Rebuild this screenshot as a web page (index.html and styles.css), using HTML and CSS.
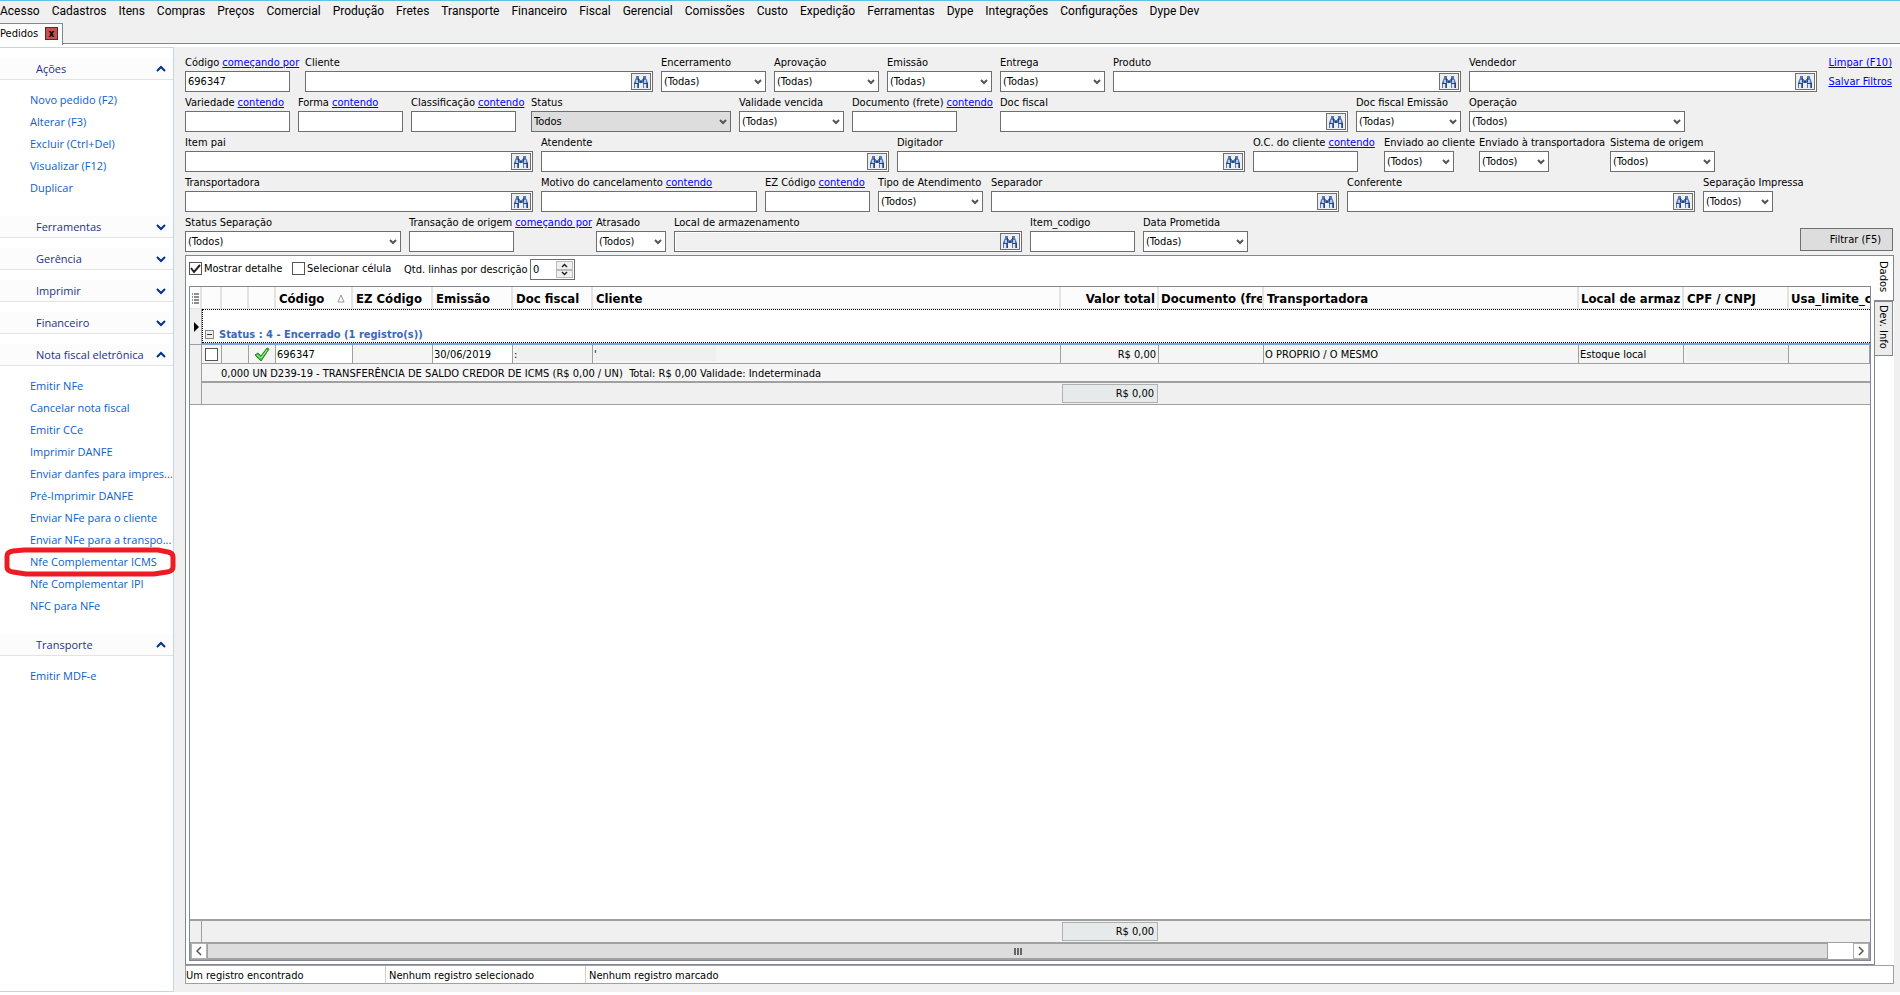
FILE: index.html
```
<!DOCTYPE html>
<html lang="pt-BR">
<head>
    <meta charset="UTF-8">
    <meta name="viewport" content="width=device-width, initial-scale=1.0">
    <title>Pedidos</title>
    <link rel="stylesheet" href="styles.css">
</head>
<body>
    <!-- shared icons -->
    <svg class="sprite" aria-hidden="true">
        <symbol id="binoculars" viewBox="0 0 16 14">
            <path d="M3 1h3v3h1v1h2V4h1V1h3v2l1 2 1 3v5h-5V8H6v5H1V8l1-3 1-2z" fill="#5478b4"/>
            <path d="M3 5h2v3H3zM11 5h2v3h-2z" fill="#b9cbe8"/>
            <path d="M2 9h2v4H2zM11 9h2v4h-2z" fill="#dfe8f6"/>
            <path d="M5 9h1v4H5zM14 9h1v4h-1zM5 3h1v4H5zM10 3h1v4h-1zM7 6h2v2H7zM1 8h5v1H1zM10 8h5v1h-5z" fill="#27457f"/>
        </symbol>
        <symbol id="down" viewBox="0 0 10 8">
            <path d="M1 2l4 4 4-4" fill="none" stroke="#00308f" stroke-width="2"/>
        </symbol>
        <symbol id="up" viewBox="0 0 10 8">
            <path d="M1 6l4-4 4 4" fill="none" stroke="#00308f" stroke-width="2"/>
        </symbol>
    </svg>

    <nav class="menu">
        <a href="#">Acesso</a>
        <a href="#">Cadastros</a>
        <a href="#">Itens</a>
        <a href="#">Compras</a>
        <a href="#">Preços</a>
        <a href="#">Comercial</a>
        <a href="#">Produção</a>
        <a href="#">Fretes</a>
        <a href="#">Transporte</a>
        <a href="#">Financeiro</a>
        <a href="#">Fiscal</a>
        <a href="#">Gerencial</a>
        <a href="#">Comissões</a>
        <a href="#">Custo</a>
        <a href="#">Expedição</a>
        <a href="#">Ferramentas</a>
        <a href="#">Dype</a>
        <a href="#">Integrações</a>
        <a href="#">Configurações</a>
        <a href="#">Dype Dev</a>
    </nav>

    <div class="tabs">
        <div class="tab">Pedidos <button class="close" aria-label="Fechar">x</button></div>
    </div>

    <div class="workspace">
        <aside class="sidebar">
            <section>
                <h2>Ações <svg><use href="#up"/></svg></h2>
                <ul>
                    <li><a href="#">Novo pedido (F2)</a></li>
                    <li><a href="#">Alterar (F3)</a></li>
                    <li><a href="#">Excluir (Ctrl+Del)</a></li>
                    <li><a href="#">Visualizar (F12)</a></li>
                    <li><a href="#">Duplicar</a></li>
                </ul>
            </section>
            <section><h2>Ferramentas <svg><use href="#down"/></svg></h2></section>
            <section><h2>Gerência <svg><use href="#down"/></svg></h2></section>
            <section><h2>Imprimir <svg><use href="#down"/></svg></h2></section>
            <section><h2>Financeiro <svg><use href="#down"/></svg></h2></section>
            <section>
                <h2>Nota fiscal eletrônica <svg><use href="#up"/></svg></h2>
                <ul>
                    <li><a href="#">Emitir NFe</a></li>
                    <li><a href="#">Cancelar nota fiscal</a></li>
                    <li><a href="#">Emitir CCe</a></li>
                    <li><a href="#">Imprimir DANFE</a></li>
                    <li><a href="#">Enviar danfes para impres...</a></li>
                    <li><a href="#">Pré-Imprimir DANFE</a></li>
                    <li><a href="#">Enviar NFe para o cliente</a></li>
                    <li><a href="#">Enviar NFe para a transpo...</a></li>
                    <li class="marked">
                        <a href="#">Nfe Complementar ICMS</a>
                        <svg class="ring" viewBox="0 0 172 30"><path d="M20 3H154L164 5Q169 6 169 10V20Q169 24 163 25L150 27H22L9 25Q3 24 3 20V9Q3 5 9 4Z" fill="none" stroke="#ed1c24" stroke-width="5"/></svg>
                    </li>
                    <li><a href="#">Nfe Complementar IPI</a></li>
                    <li><a href="#">NFC para NFe</a></li>
                </ul>
            </section>
            <section>
                <h2>Transporte <svg><use href="#up"/></svg></h2>
                <ul>
                    <li><a href="#">Emitir MDF-e</a></li>
                </ul>
            </section>
        </aside>

        <main>
            <form class="filters">
                <div class="row">
                    <div class="field cap-112"><div class="caption"><label for="codigo">Código</label><a href="#">começando por</a></div><input id="codigo" class="small" value="696347"></div>
                    <div class="field"><div class="caption"><label for="cliente">Cliente</label></div><div class="lookup"><input id="cliente"><button type="button" aria-label="Buscar"><svg><use href="#binoculars"/></svg></button></div></div>
                    <div class="field"><div class="caption"><label for="encerramento">Encerramento</label></div><select id="encerramento" class="small"><option>(Todas)</option></select></div>
                    <div class="field"><div class="caption"><label for="aprovacao">Aprovação</label></div><select id="aprovacao" class="small"><option>(Todas)</option></select></div>
                    <div class="field"><div class="caption"><label for="emissao">Emissão</label></div><select id="emissao" class="small"><option>(Todas)</option></select></div>
                    <div class="field"><div class="caption"><label for="entrega">Entrega</label></div><select id="entrega" class="small"><option>(Todas)</option></select></div>
                    <div class="field"><div class="caption"><label for="produto">Produto</label></div><div class="lookup"><input id="produto"><button type="button" aria-label="Buscar"><svg><use href="#binoculars"/></svg></button></div></div>
                    <div class="field"><div class="caption"><label for="vendedor">Vendedor</label></div><div class="lookup"><input id="vendedor"><button type="button" aria-label="Buscar"><svg><use href="#binoculars"/></svg></button></div></div>
                    <div class="filter-links"><a href="#">Limpar (F10)</a><a href="#">Salvar Filtros</a></div>
                </div>
                <div class="row">
                    <div class="field cap-105"><div class="caption"><label for="variedade">Variedade</label><a href="#">contendo</a></div><input id="variedade" class="small"></div>
                    <div class="field cap-105"><div class="caption"><label for="forma">Forma</label><a href="#">contendo</a></div><input id="forma" class="small"></div>
                    <div class="field cap-112"><div class="caption"><label for="classificacao">Classificação</label><a href="#">contendo</a></div><input id="classificacao" class="small"></div>
                    <div class="field"><div class="caption"><label for="status">Status</label></div><select id="status" class="status"><option>Todos</option></select></div>
                    <div class="field"><div class="caption"><label for="validade">Validade vencida</label></div><select id="validade" class="small"><option>(Todas)</option></select></div>
                    <div class="field cap-140"><div class="caption"><label for="documento">Documento (frete)</label><a href="#">contendo</a></div><input id="documento" class="small"></div>
                    <div class="field"><div class="caption"><label for="docfiscal">Doc fiscal</label></div><div class="lookup"><input id="docfiscal"><button type="button" aria-label="Buscar"><svg><use href="#binoculars"/></svg></button></div></div>
                    <div class="field cap-105"><div class="caption"><label for="docemissao">Doc fiscal Emissão</label></div><select id="docemissao" class="small"><option>(Todas)</option></select></div>
                    <div class="field"><div class="caption"><label for="operacao">Operação</label></div><select id="operacao" class="medium"><option>(Todos)</option></select></div>
                </div>
                <div class="row">
                    <div class="field"><div class="caption"><label for="itempai">Item pai</label></div><div class="lookup"><input id="itempai"><button type="button" aria-label="Buscar"><svg><use href="#binoculars"/></svg></button></div></div>
                    <div class="field"><div class="caption"><label for="atendente">Atendente</label></div><div class="lookup"><input id="atendente"><button type="button" aria-label="Buscar"><svg><use href="#binoculars"/></svg></button></div></div>
                    <div class="field"><div class="caption"><label for="digitador">Digitador</label></div><div class="lookup"><input id="digitador"><button type="button" aria-label="Buscar"><svg><use href="#binoculars"/></svg></button></div></div>
                    <div class="field cap-123"><div class="caption"><label for="occliente">O.C. do cliente</label><a href="#">contendo</a></div><input id="occliente" class="small"></div>
                    <div class="field cap-87"><div class="caption"><label for="envcliente">Enviado ao cliente</label></div><select id="envcliente" class="tiny"><option>(Todos)</option></select></div>
                    <div class="field cap-123"><div class="caption"><label for="envtransp">Enviado à transportadora</label></div><select id="envtransp" class="tiny"><option>(Todos)</option></select></div>
                    <div class="field"><div class="caption"><label for="sistema">Sistema de origem</label></div><select id="sistema" class="small"><option>(Todos)</option></select></div>
                </div>
                <div class="row">
                    <div class="field"><div class="caption"><label for="transportadora">Transportadora</label></div><div class="lookup"><input id="transportadora"><button type="button" aria-label="Buscar"><svg><use href="#binoculars"/></svg></button></div></div>
                    <div class="field"><div class="caption"><label for="motivo">Motivo do cancelamento</label><a href="#">contendo</a></div><input id="motivo" class="medium"></div>
                    <div class="field cap-105"><div class="caption"><label for="ezcodigo">EZ Código</label><a href="#">contendo</a></div><input id="ezcodigo" class="small"></div>
                    <div class="field cap-105"><div class="caption"><label for="tipo">Tipo de Atendimento</label></div><select id="tipo" class="small"><option>(Todos)</option></select></div>
                    <div class="field"><div class="caption"><label for="separador">Separador</label></div><div class="lookup"><input id="separador"><button type="button" aria-label="Buscar"><svg><use href="#binoculars"/></svg></button></div></div>
                    <div class="field"><div class="caption"><label for="conferente">Conferente</label></div><div class="lookup"><input id="conferente"><button type="button" aria-label="Buscar"><svg><use href="#binoculars"/></svg></button></div></div>
                    <div class="field"><div class="caption"><label for="sepimpressa">Separação Impressa</label></div><select id="sepimpressa" class="tiny"><option>(Todos)</option></select></div>
                </div>
                <div class="row">
                    <div class="field"><div class="caption"><label for="statussep">Status Separação</label></div><select id="statussep" class="medium"><option>(Todos)</option></select></div>
                    <div class="field cap-179"><div class="caption"><label for="transacao">Transação de origem</label><a href="#">começando por</a></div><input id="transacao" class="small"></div>
                    <div class="field"><div class="caption"><label for="atrasado">Atrasado</label></div><select id="atrasado" class="tiny"><option>(Todos)</option></select></div>
                    <div class="field"><div class="caption"><label for="local">Local de armazenamento</label></div><div class="lookup disabled"><input id="local" disabled><button type="button" aria-label="Buscar"><svg><use href="#binoculars"/></svg></button></div></div>
                    <div class="field"><div class="caption"><label for="itemcodigo">Item_codigo</label></div><input id="itemcodigo" class="small"></div>
                    <div class="field"><div class="caption"><label for="dataprom">Data Prometida</label></div><select id="dataprom" class="small"><option>(Todas)</option></select></div>
                    <button type="button" class="filter-btn">Filtrar (F5)</button>
                </div>
            </form>

            <div class="results">
                <div class="page">
                    <div class="options">
                        <label class="check"><input type="checkbox" checked>Mostrar detalhe</label>
                        <label class="check"><input type="checkbox">Selecionar célula</label>
                        <label for="linhas">Qtd. linhas por descrição</label>
                        <div class="spin">
                            <input id="linhas" value="0">
                            <button type="button" aria-label="Mais"><svg viewBox="0 0 7 5"><path d="M1 4l2.500-2.500L6 4" fill="none" stroke="#222" stroke-width="1.500"/></svg></button>
                            <button type="button" aria-label="Menos"><svg viewBox="0 0 7 5"><path d="M1 1l2.500 2.500L6 1" fill="none" stroke="#222" stroke-width="1.500"/></svg></button>
                        </div>
                    </div>

                    <div class="grid">
                        <table>
                            <colgroup>
                                <col class="c-mark"><col class="c-check"><col class="c-icon"><col class="c-icon"><col class="c-code">
                                <col class="c-80"><col class="c-80"><col class="c-80"><col><col class="c-total"><col class="c-105">
                                <col class="c-transp"><col class="c-105"><col class="c-105"><col class="c-last">
                            </colgroup>
                            <thead>
                                <tr>
                                    <th><svg class="list" viewBox="0 0 8 11"><path d="M1 1h1M1 4h1M1 7h1M1 10h1M3 1h5M3 4h5M3 7h5M3 10h5" stroke="#222"/></svg></th>
                                    <th></th><th></th><th></th>
                                    <th><span class="sorted">Código <svg viewBox="0 0 8 9"><path d="M4 1l3 7H1z" fill="none" stroke="#999"/></svg></span></th>
                                    <th>EZ Código</th>
                                    <th>Emissão</th>
                                    <th>Doc fiscal</th>
                                    <th>Cliente</th>
                                    <th class="num">Valor total</th>
                                    <th class="cut"><span class="clip">Documento (fre</span></th>
                                    <th>Transportadora</th>
                                    <th class="cut"><span class="clip">Local de armaz</span></th>
                                    <th>CPF / CNPJ</th>
                                    <th class="cut"><span class="clip">Usa_limite_c</span></th>
                                </tr>
                            </thead>
                            <tbody>
                                <tr class="group">
                                    <td class="mark"><svg viewBox="0 0 5 10"><path d="M0 0l5 5-5 5z"/></svg></td>
                                    <td colspan="14"><div class="group-title"><button type="button" aria-label="Recolher"></button>Status : 4 - Encerrado (1 registro(s))</div></td>
                                </tr>
                                <tr class="record">
                                    <td class="mark" rowspan="3"></td>
                                    <td class="pick"><input type="checkbox" aria-label="Marcar pedido 696347"></td>
                                    <td></td>
                                    <td class="ok"><svg viewBox="0 0 16 14"><path d="M1 8l3-2 3 3 6-8 2 1-8 12z" fill="#3fc13f" stroke="#1c8a1c"/><path d="M3 8l4 3 6-8" fill="none" stroke="#a8f09a"/></svg></td>
                                    <td class="white">696347</td>
                                    <td></td>
                                    <td class="white">30/06/2019</td>
                                    <td class="hidden-data">:</td>
                                    <td class="hidden-data">'</td>
                                    <td class="num">R$ 0,00</td>
                                    <td></td>
                                    <td>O PROPRIO / O MESMO</td>
                                    <td>Estoque local</td>
                                    <td class="hidden-data"></td>
                                    <td></td>
                                </tr>
                                <tr class="detail"><td colspan="14">0,000 UN D239-19 - TRANSFERÊNCIA DE SALDO CREDOR DE ICMS (R$ 0,00 / UN)&nbsp; Total: R$ 0,00 Validade: Indeterminada</td></tr>
                                <tr class="sum"><td colspan="8"></td><td><output>R$ 0,00</output></td><td colspan="5"></td></tr>
                            </tbody>
                        </table>

                        <table class="footer">
                            <colgroup>
                                <col class="c-mark"><col><col class="c-total"><col class="c-rest">
                            </colgroup>
                            <tbody>
                                <tr class="sum"><td class="mark"></td><td></td><td><output>R$ 0,00</output></td><td></td></tr>
                            </tbody>
                        </table>
                        <div class="scroll">
                            <button type="button" aria-label="Esquerda"><svg viewBox="0 0 6 10"><path d="M5 1L1 5l4 4" fill="none" stroke="#555" stroke-width="1.500"/></svg></button>
                            <div class="thumb"><i></i></div>
                            <button type="button" aria-label="Direita"><svg viewBox="0 0 6 10"><path d="M1 1l4 4-4 4" fill="none" stroke="#555" stroke-width="1.500"/></svg></button>
                        </div>
                    </div>
                </div>
                <div class="side-tabs">
                    <button type="button" class="active">Dados</button>
                    <button type="button">Dev. Info</button>
                </div>
            </div>

            <footer class="status-bar">
                <span>Um registro encontrado</span>
                <span>Nenhum registro selecionado</span>
                <span>Nenhum registro marcado</span>
            </footer>
        </main>
    </div>
</body>
</html>
```
FILE: styles.css
```
* {
    margin: 0;
    padding: 0;
    box-sizing: border-box;
}

body {
    font-family: Tahoma, "DejaVu Sans Condensed", "DejaVu Sans", sans-serif;
    font-size: 11px;
    color: #000;
    background: #fff;
    min-height: 100vh;
    padding-bottom: 3px;
    display: flex;
    flex-direction: column;
}

button, input, select, output {
    font: inherit;
    color: inherit;
    border-radius: 0;
}

svg {
    display: block;
}

.sprite {
    display: none;
}

/* top menu */
.menu {
    display: flex;
    gap: 12px;
    height: 23px;
    border-top: 1px solid #5fc3e6;
    background: #f0f0f0;
    font-family: "Segoe UI", Roboto, sans-serif;
    font-size: 12px;
    line-height: 20px;
}

.menu a {
    color: #000;
    text-decoration: none;
    white-space: nowrap;
}

.tabs {
    display: flex;
    height: 24px;
    background: linear-gradient(#f0f0f0 20px, #828790 20px, #828790 21px, #fff 21px);
}

.tab {
    display: flex;
    align-items: center;
    justify-content: space-between;
    width: 63px;
    height: 22px;
    padding-right: 4px;
    padding-bottom: 2px;
    background: #fff;
    border-top: 1px solid #828790;
    border-right: 1px solid #828790;
}

.close {
    width: 13px;
    height: 13px;
    border: 1px solid #5a2a28;
    background: #c75050;
    font-size: 10px;
    font-weight: bold;
    line-height: 9px;
}

.workspace {
    flex: 1;
    display: flex;
    background: #f0f0f0;
}

/* sidebar */
.sidebar {
    flex: none;
    width: 174px;
    padding-top: 10px;
    background: #fff;
    border: 1px solid #c9d5e0;
    border-left: none;
    font-family: "Segoe UI", "Open Sans", sans-serif;
}

.sidebar section {
    margin-bottom: 10px;
}

.sidebar h2 {
    display: flex;
    align-items: center;
    justify-content: space-between;
    height: 22px;
    padding: 0 7px 0 36px;
    background: #fcfcfc;
    border-bottom: 1px solid #e3e3e3;
    color: #1e3287;
    font-size: 11px;
    font-weight: normal;
    white-space: nowrap;
}

.sidebar h2 svg {
    flex: none;
    width: 10px;
    height: 8px;
}

.sidebar ul {
    list-style: none;
    padding: 9px 0 7px 30px;
}

.sidebar li {
    height: 22px;
    line-height: 22px;
    white-space: nowrap;
}

.sidebar a {
    color: #0c61c7;
    text-decoration: none;
}

.marked {
    position: relative;
}

.ring {
    position: absolute;
    top: -4px;
    left: -26px;
    width: 172px;
    height: 30px;
    pointer-events: none;
}

main {
    flex: 1;
    min-width: 0;
    display: flex;
    flex-direction: column;
    padding: 6px 6px 8px 11px;
}

/* filters */
.row {
    display: flex;
    gap: 8px;
    height: 40px;
}

.field {
    flex: none;
    display: flex;
    flex-direction: column;
    align-items: flex-start;
}

.caption {
    display: flex;
    gap: 3px;
    height: 18px;
    line-height: 20px;
    white-space: nowrap;
}

.cap-87 { width: 87px; }
.cap-105 { width: 105px; }
.cap-112 { width: 112px; }
.cap-123 { width: 123px; }
.cap-140 { width: 140px; }
.cap-179 { width: 179px; }

.filters a {
    color: #0000ff;
}

.field input,
.field select,
.lookup {
    height: 21px;
    padding: 0 2px;
    background-color: #fff;
    border: 1px solid #6e6e6e;
}

.field select {
    appearance: none;
    background-image: url("data:image/svg+xml,%3Csvg xmlns='http://www.w3.org/2000/svg' width='8' height='6'%3E%3Cpath d='M1 1l3 3 3-3' fill='none' stroke='%23555' stroke-width='2'/%3E%3C/svg%3E");
    background-repeat: no-repeat;
    background-position: right 3px center;
}

.tiny { width: 70px; }
.small { width: 105px; }
.medium { width: 216px; }
.status { width: 200px; }

.field .status {
    background-color: #ddd;
}

.lookup {
    display: flex;
    align-items: center;
    width: 348px;
    padding: 0 1px;
}

.lookup input {
    flex: 1;
    min-width: 0;
    height: 17px;
    border: none;
}

.lookup.disabled input {
    background: #f0f0f0;
}

.lookup button {
    display: flex;
    align-items: center;
    justify-content: center;
    width: 20px;
    height: 17px;
    background: #eee;
    border: 1px solid #6e6e6e;
}

.lookup svg {
    width: 16px;
    height: 14px;
}

.filter-links {
    display: flex;
    flex-direction: column;
    align-items: flex-end;
    margin-left: auto;
    padding-right: 2px;
    line-height: 19px;
    white-space: nowrap;
}

.filter-btn {
    width: 93px;
    height: 23px;
    margin: 15px 1px 0 auto;
    padding-left: 18px;
    background: #ddd;
    border: 1px solid #707070;
}

/* results */
.results {
    flex: 1;
    display: flex;
    margin-top: 2px;
}

.page {
    flex: 1;
    min-width: 0;
    display: flex;
    flex-direction: column;
    padding: 3px;
    background: #fff;
    border: 1px solid #828790;
}

.options {
    display: flex;
    align-items: center;
    height: 21px;
}

.check {
    display: flex;
    align-items: center;
    gap: 2px;
    width: 103px;
    padding-bottom: 2px;
    white-space: nowrap;
}

.check + .check {
    width: 112px;
}

input[type="checkbox"] {
    appearance: none;
    flex: none;
    width: 13px;
    height: 13px;
    border: 1px solid #555;
    background: #fff;
}

input[type="checkbox"]:checked {
    background: url("data:image/svg+xml,%3Csvg xmlns='http://www.w3.org/2000/svg' width='11' height='11'%3E%3Cpath d='M1 5l3 4 6-7' fill='none' stroke='%23222' stroke-width='2'/%3E%3C/svg%3E");
}

.options > label:nth-child(3) {
    width: 126px;
    white-space: nowrap;
}

.spin {
    display: grid;
    grid-template-columns: 1fr 17px;
    grid-template-rows: 1fr 1fr;
    width: 45px;
    height: 21px;
    padding: 1px;
    border: 1px solid #6e6e6e;
}

.spin input {
    grid-row: 1 / 3;
    min-width: 0;
    padding-left: 1px;
    border: none;
}

.spin button {
    display: flex;
    align-items: center;
    justify-content: center;
    background: #f0f0f0;
    border: 1px solid #bbb;
}

.spin svg {
    width: 7px;
    height: 5px;
}

.grid {
    flex: 1;
    display: flex;
    flex-direction: column;
    margin-top: 6px;
    border: 1px solid #828790;
}

.grid table {
    width: 100%;
    table-layout: fixed;
    border-collapse: separate;
    border-spacing: 0;
}

.c-mark { width: 12px; }
.c-check { width: 20px; }
.c-icon { width: 27px; }
.c-code { width: 77px; }
.c-80 { width: 80px; }
.c-total { width: 98px; }
.c-105 { width: 105px; }
.c-transp { width: 315px; }
.c-last { width: 81px; }
.c-rest { width: 711px; }

.grid th {
    height: 22px;
    padding: 2px 2px 0 3px;
    background: #fcfcfc;
    border-right: 2px solid #e3e3e3;
    border-bottom: 1px solid #e3e3e3;
    font-size: 13px;
    text-align: left;
    white-space: nowrap;
}

.grid th:first-child {
    padding-left: 1px;
}

.grid th:last-child {
    border-right: none;
}

.grid th.cut {
    padding-left: 2px;
    padding-right: 0;
}

.grid .num {
    text-align: right;
}

.clip {
    display: block;
    overflow: hidden;
}

.list {
    width: 8px;
    height: 11px;
}

.sorted {
    display: flex;
    align-items: center;
    justify-content: space-between;
    padding-right: 4px;
}

.sorted svg {
    width: 8px;
    height: 9px;
}

.grid .mark {
    background: #f0f0f0;
    border-right: 1px solid #a0a0a0;
    border-bottom: 1px solid #a0a0a0;
}

.mark svg {
    width: 5px;
    height: 10px;
    margin-left: 4px;
}

.group td {
    height: 36px;
}

.group td + td {
    vertical-align: bottom;
    border-bottom: 2px solid #7da2e0;
}

.group-title {
    display: flex;
    align-items: flex-end;
    gap: 5px;
    height: 34px;
    padding: 0 0 1px 2px;
    border: 1px dotted #000;
    border-right: none;
    color: #3a68b8;
    font-weight: bold;
}

.group-title button {
    width: 9px;
    height: 9px;
    margin-bottom: 2px;
    border: 1px solid #888;
    background: linear-gradient(#333, #333) center / 5px 1px no-repeat #eee;
}

.record td {
    height: 19px;
    padding: 0 2px 0 1px;
    background: #f5f5f5;
    border-right: 1px solid #a0a0a0;
    border-bottom: 1px solid #a0a0a0;
    white-space: nowrap;
}

.record .white {
    background: #fff;
}

.record .hidden-data {
    background: linear-gradient(#f0f0f0, #f0f0f0) 3px 2px / 120px 14px no-repeat #f5f5f5;
}

.record .pick {
    padding-left: 3px;
}

.record .pick input {
    display: block;
}

.ok svg {
    width: 16px;
    height: 14px;
    margin-left: 4px;
}

.detail td {
    height: 19px;
    padding: 1px 0 0 19px;
    background: #f5f5f5;
    border-bottom: 2px solid #a0a0a0;
}

.sum td {
    height: 22px;
    background: #f0f0f0;
    border-bottom: 1px solid #a0a0a0;
}

.sum output {
    display: block;
    width: 96px;
    height: 19px;
    margin-left: 1px;
    padding-right: 3px;
    background: #e6eaea;
    border: 1px solid #b0b0b0;
    line-height: 17px;
    text-align: right;
}

.grid .footer {
    margin-top: auto;
    border-top: 2px solid #a0a0a0;
}

.scroll {
    display: flex;
    height: 17px;
    border: 1px solid #a0a0a0;
    border-top: none;
    background: #fff;
}

.scroll button {
    display: flex;
    align-items: center;
    justify-content: center;
    width: 16px;
    background: #fff;
    border: 1px solid #b0b0b0;
}

.scroll svg {
    width: 6px;
    height: 10px;
}

.thumb {
    flex: 1;
    display: flex;
    align-items: center;
    justify-content: center;
    margin-right: 25px;
    background: #ddd;
    border: 1px solid #a0a0a0;
}

.thumb i {
    width: 8px;
    height: 7px;
    background: repeating-linear-gradient(90deg, #666 0, #666 2px, #ddd 2px, #ddd 3px);
}

.side-tabs {
    display: flex;
    flex-direction: column;
    width: 19px;
    background: #fff;
}

.side-tabs button {
    width: 18px;
    height: 55px;
    padding-bottom: 3px;
    background: #ececec;
    border: 1px solid #828790;
    border-left: none;
    writing-mode: vertical-rl;
}

.side-tabs .active {
    width: 20px;
    height: 46px;
    margin-left: -1px;
    background: #fff;
}

.status-bar {
    display: flex;
    height: 19px;
    background: #fff;
    border: 1px solid #a0a0a0;
    line-height: 19px;
}

.status-bar span {
    width: 200px;
    border-right: 1px solid #d0d0d0;
}

.status-bar span + span {
    padding-left: 3px;
}

.status-bar span:last-child {
    border-right: none;
}
```
